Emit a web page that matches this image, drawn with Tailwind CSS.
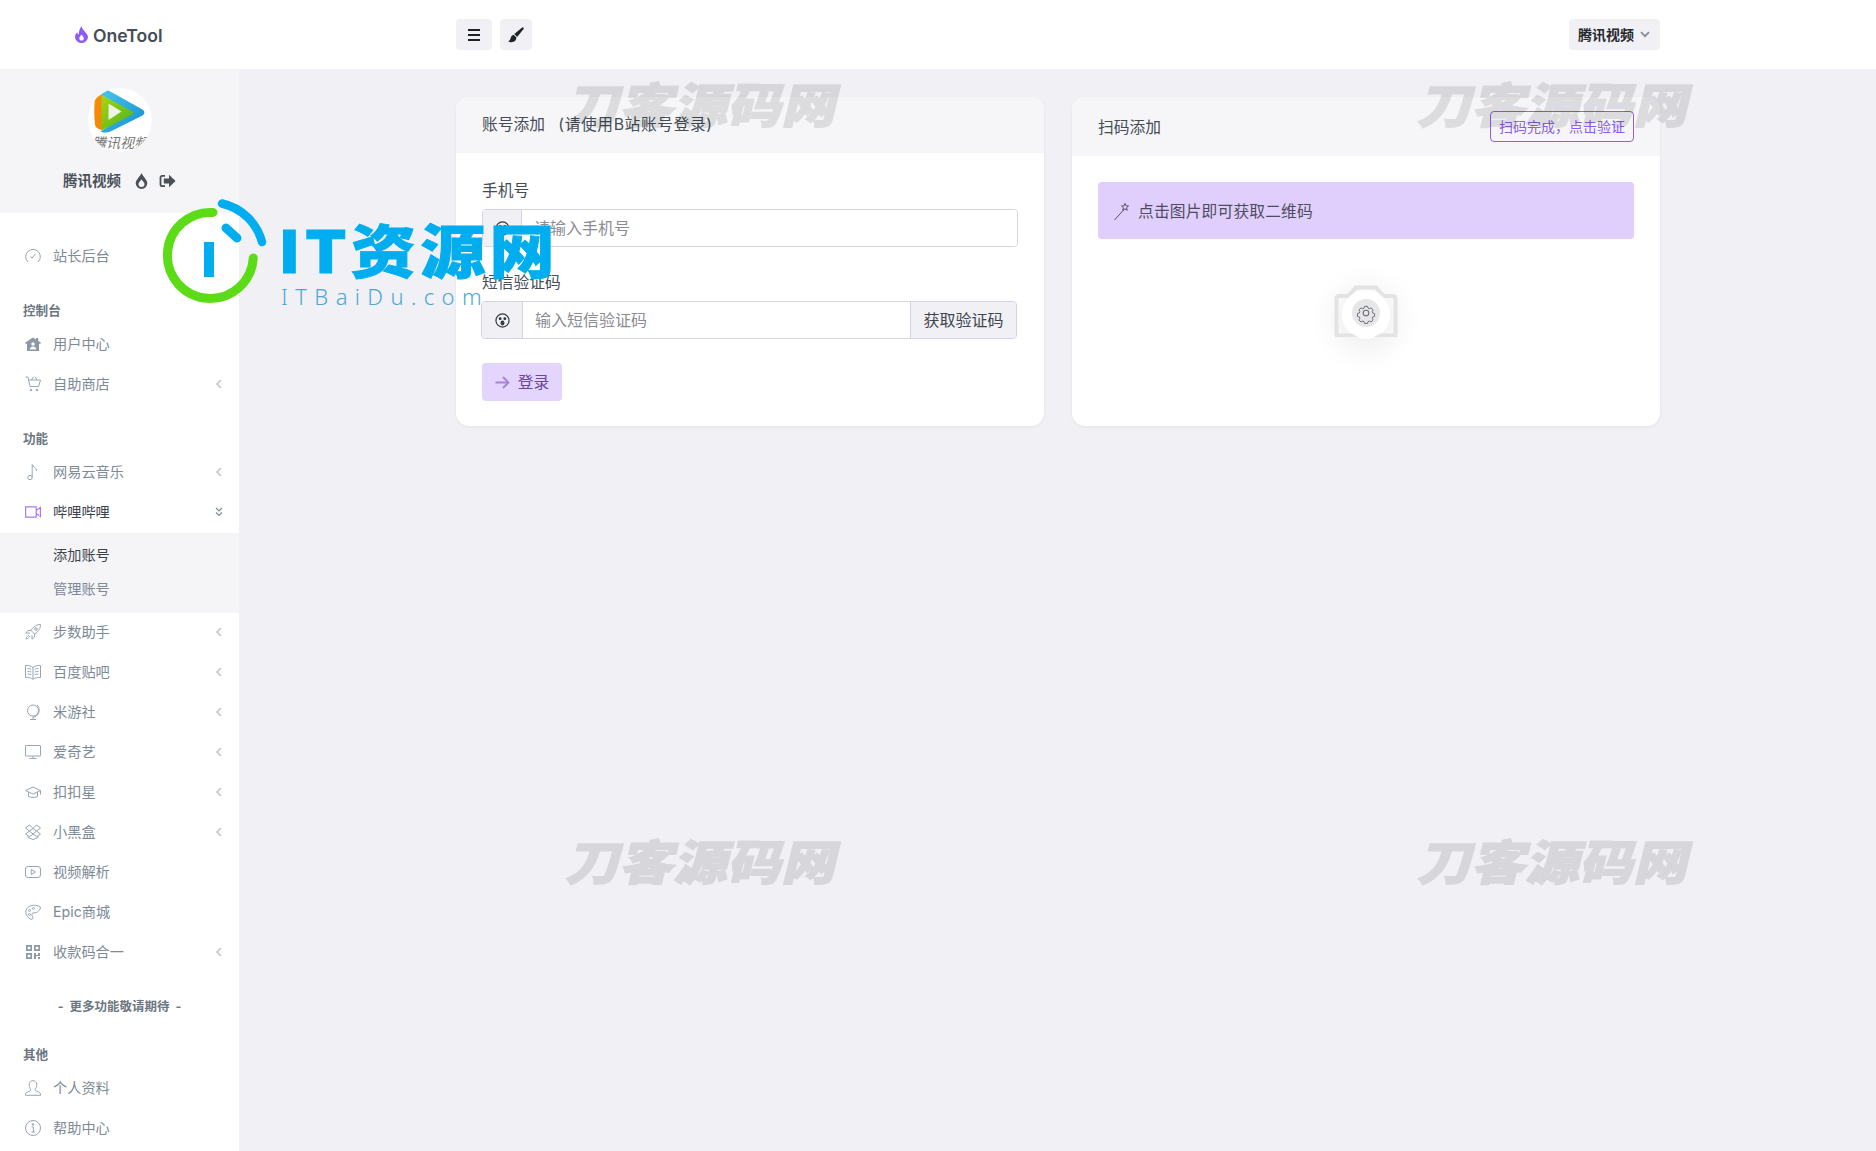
<!DOCTYPE html>
<html lang="zh">
<head>
<meta charset="utf-8">
<title>OneTool</title>
<script src="https://cdn.jsdelivr.net/npm/@tailwindcss/browser@4"></script>
</head>
<body class="m-0">
<div class="relative w-[1876px] h-[1151px] overflow-hidden bg-[#f0f0f5] font-['Inter','Noto_Sans_CJK_SC',sans-serif] text-[#3f4650]">

  <header class="flex h-[69px] bg-white">
    <div class="flex w-[456px] items-center pl-[75px]">
      <svg class="w-[13px] h-[17px]" viewBox="0 0 13 17"><path fill="#8b5cf6" fill-rule="evenodd" d="M6.500 0c.6 2.600 1.500 3.400 3.200 5.400C11.600 7.600 13 9 13 11a6.200 6.200 0 0 1-6.500 6A6.200 6.200 0 0 1 0 11c0-2 1-3.600 2.300-4.800.1 1.300.6 2 1.400 2.400C3.700 5.400 4.800 2.400 6.500 0zM6.600 8.500C5.500 10 4.300 10.800 4.300 12.300c0 1.400 1 2.300 2.200 2.300s2.300-.9 2.300-2.300c0-1.500-1.300-2.300-2.200-3.800z"/></svg>
      <span class="ml-[5px] pt-[2px] text-[17.600px] font-semibold leading-none text-[#454c57]">OneTool</span>
    </div>
    <div class="flex items-center gap-2">
      <button class="flex h-[31px] w-9 items-center justify-center rounded bg-[#f0f0f5]">
        <svg class="w-[14px] h-[12px]" viewBox="0 0 14 12"><path stroke="#1f2328" stroke-width="1.800" d="M1 1h12M1 6h12M1 11h12"/></svg>
      </button>
      <button class="flex h-[31px] w-8 items-center justify-center rounded bg-[#f0f0f5]">
        <svg class="w-4 h-4" viewBox="0 0 15 15"><path fill="#1f2328" d="M14.500.6c.5.5.2 1.200-.3 1.800L8.600 9.300 5.900 6.600 12.700.9c.7-.6 1.300-.8 1.800-.3zM5.300 7.300l2.600 2.600c-.1 2.600-1.900 4.400-4.700 4.400-1 0-2.300-.4-3-1 .9-.2 1.600-.7 1.900-1.700.4-1.700 1-3.900 3.200-4.300z"/></svg>
      </button>
    </div>
    <div class="ml-auto mr-[216px] flex items-center">
      <button class="flex h-[31px] w-[91px] items-center rounded bg-[#f0f0f5] pl-[9px] text-[14px] font-semibold text-[#24282d]">
        腾讯视频
        <svg class="ml-[6px] w-[10px] h-[7px]" viewBox="0 0 10 7"><path fill="none" stroke="#868e96" stroke-width="1.800" d="M1 1.200l4 4 4-4"/></svg>
      </button>
    </div>
  </header>

  <div class="flex h-[1082px]">
    <aside class="w-[239px] shrink-0 bg-white text-[14.200px] text-[#7d8a98]">
      <div class="flex h-[144px] flex-col items-center bg-[#f5f5f8] pt-[19px]">
        <svg class="w-16 h-16" viewBox="0 0 64 64">
          <defs>
            <clipPath id="av"><circle cx="32" cy="32" r="32"/></clipPath>
            <linearGradient id="bl" x1="0" y1="0" x2="1" y2="1"><stop offset="0" stop-color="#4cc4ea"/><stop offset="1" stop-color="#0f8fd0"/></linearGradient>
            <linearGradient id="gr" x1="0" y1="0" x2="1" y2="1"><stop offset="0" stop-color="#a5d80f"/><stop offset="1" stop-color="#4bae1f"/></linearGradient>
          </defs>
          <g clip-path="url(#av)">
            <circle cx="32" cy="32" r="32" fill="#fff"/>
            <g transform="translate(-1.500 0)">
              <path fill="#f58a07" d="M16 6c-4 .5-7 1.500-7.500 4.500-1 8-1 16 0 26 .4 3 3.500 5 7.500 5.500z"/>
              <path fill="url(#bl)" d="M17 2c2-.6 4 0 5.500.8l33 18.500c3.200 1.800 3.200 4.700 0 6.500L24 43.500c-3 1.500-6.500 1.300-9 .5-.8-.3-.5-1 .5-1.500l29-18L15 7c0-2.500 0-4.500 2-5z"/>
              <path fill="url(#gr)" d="M15 7 46 23.500c1.500.8 1.500 2 0 3L15 42.500z"/>
              <path fill="#eef3e6" d="M22 15.500 35 23.500 22 32z"/>
            </g>
            <text x="32" y="60" text-anchor="middle" font-size="14" font-style="italic" fill="#777" font-family="'Noto Sans CJK SC',sans-serif">腾讯视频</text>
          </g>
        </svg>
        <div class="mt-[19px] flex h-[20px] items-center text-[14.500px] font-bold text-[#4a515b]">
          <span class="w-[72px]">腾讯视频</span>
          <svg class="w-[13px] h-[16px]" viewBox="0 0 13 16"><path fill="#495057" fill-rule="evenodd" d="M6.500 0c.8 2.800 5.800 6.800 5.800 10.200a5.800 5.800 0 0 1-11.600 0C.7 6.800 5.700 2.800 6.500 0zM6.500 6.500C5.500 8 3.500 9.300 3.500 11a3 3 0 0 0 6 0c0-1.700-2-3-3-4.500z"/></svg>
          <svg class="ml-[11px] w-[17px] h-[14px]" viewBox="0 0 17 14"><path fill="#495057" d="M6 1H3.200C1.600 1 .6 2 .6 3.600v6.800C.6 12 1.600 13 3.200 13H6v-1.800H3.200c-.5 0-.8-.3-.8-.8V3.600c0-.5.3-.8.8-.8H6zM10 .8 16.600 7 10 13.200V9.500H4.800v-5H10z"/></svg>
        </div>
      </div>

      <nav class="pt-6">
        <a class="flex h-10 items-center pb-[2px] pl-[25px] pr-4">
          <svg class="mr-3 w-4 h-4" viewBox="0 0 16 16" fill="none" stroke="#9aa5b1"><path d="M3 14A7.300 7.300 0 1 1 13 14"/><path d="M5.500 8.500l1.500 1.700 3.500-4.500"/></svg>站长后台
        </a>

        <div class="flex h-12 items-end pb-[5px] pl-[23px] text-[12.600px] leading-[18px] font-bold text-[#6c7682]">控制台</div>
        <a class="flex h-10 items-center pb-[2px] pl-[25px] pr-4">
          <svg class="mr-3 w-4 h-4" viewBox="0 0 16 16"><path fill="#8d98a5" fill-rule="evenodd" d="M8 1.500 11 3.400V2h2.200v2.800L16 6.800l-.7 1H14V15H2V7.800H.7L0 6.800zM8 6.200a1.800 1.800 0 1 0 0 3.600 1.800 1.800 0 0 0 0-3.600zM4.800 13.500h6.400c0-1.800-1.400-3-3.200-3s-3.200 1.200-3.200 3z"/></svg>用户中心
        </a>
        <a class="flex h-10 items-center pb-[2px] pl-[25px] pr-4">
          <svg class="mr-3 w-4 h-4" viewBox="0 0 16 16" fill="none" stroke="#9aa5b1"><path d="M.5 1h2.500l2 9.500h8.500L15.500 4H3.800"/><path d="M6.500 4 8.500 .8M12 4 10 .8"/><circle cx="6" cy="14" r=".8" fill="#9aa5b1"/><circle cx="12" cy="14" r=".8" fill="#9aa5b1"/></svg>自助商店
          <svg class="ml-auto w-2 h-[10px]" viewBox="0 0 8 10"><path fill="none" stroke="#c3c9d0" stroke-width="1.700" d="M6 1 2 5l4 4"/></svg>
        </a>

        <div class="flex h-12 items-end pb-[5px] pl-[23px] text-[12.600px] leading-[18px] font-bold text-[#6c7682]">功能</div>
        <a class="flex h-10 items-center pb-[2px] pl-[25px] pr-4">
          <svg class="mr-3 w-4 h-4" viewBox="0 0 16 16" fill="none" stroke="#9aa5b1"><circle cx="5" cy="13.500" r="2.200"/><path d="M7.200 13.500V.5c.5 2.500 4.500 3 4.500 6.500"/></svg>网易云音乐
          <svg class="ml-auto w-2 h-[10px]" viewBox="0 0 8 10"><path fill="none" stroke="#c3c9d0" stroke-width="1.700" d="M6 1 2 5l4 4"/></svg>
        </a>
        <a class="flex h-10 items-center pb-[2px] pl-[25px] pr-4 text-[#3c434c]">
          <svg class="mr-3 w-4 h-4" viewBox="0 0 16 16" fill="none" stroke="#a67bf5" stroke-width="1.200"><path d="M.6 2.800h10.600v10.400H.6zM11.200 6.500l4.200-3v9l-4.200-3"/></svg>哔哩哔哩
          <svg class="ml-auto w-2 h-[10px]" viewBox="0 0 8 10"><path fill="none" stroke="#7d8a98" stroke-width="1.200" d="M1 1l3 3 3-3M1 5.500l3 3 3-3"/></svg>
        </a>
        <div class="bg-[#f5f5f8] py-[6px] pl-[53px]">
          <a class="flex h-[34px] items-center pb-[2px] text-[#3c434c]">添加账号</a>
          <a class="flex h-[34px] items-center pb-[2px]">管理账号</a>
        </div>
        <a class="flex h-10 items-center pb-[2px] pl-[25px] pr-4">
          <svg class="mr-3 w-4 h-4" viewBox="0 0 16 16" fill="none" stroke="#9aa5b1"><path d="M15.500.5c-3.500 0-7 1.500-9.500 6l3.500 3.500c4.500-2.500 6-6 6-9.500z"/><circle cx="11" cy="5" r="1.300"/><path d="M6 6.500H3L.8 9H4.800M9.500 10v3L7 15.200V11.200M4 11c-1.500.6-2.500 2-3 4 2-.5 3.400-1.500 4-3"/></svg>步数助手
          <svg class="ml-auto w-2 h-[10px]" viewBox="0 0 8 10"><path fill="none" stroke="#c3c9d0" stroke-width="1.700" d="M6 1 2 5l4 4"/></svg>
        </a>
        <a class="flex h-10 items-center pb-[2px] pl-[25px] pr-4">
          <svg class="mr-3 w-4 h-4" viewBox="0 0 16 16" fill="none" stroke="#9aa5b1"><path d="M8 3.500C6 1.800 3 1.300.5 1.500v12c2.500-.2 5.500.2 7.500 1.800 2-1.600 5-2 7.500-1.800v-12C13 1.300 10 1.800 8 3.500zM8 3.500v11.500M2.500 4.500c1.300 0 2.500.2 3.700.7M2.500 7.300c1.300 0 2.500.2 3.700.7M2.500 10c1.300 0 2.500.2 3.700.7M13.500 4.500c-1.300 0-2.500.2-3.700.7M13.500 7.300c-1.300 0-2.500.2-3.700.7M13.500 10c-1.300 0-2.500.2-3.700.7"/></svg>百度贴吧
          <svg class="ml-auto w-2 h-[10px]" viewBox="0 0 8 10"><path fill="none" stroke="#c3c9d0" stroke-width="1.700" d="M6 1 2 5l4 4"/></svg>
        </a>
        <a class="flex h-10 items-center pb-[2px] pl-[25px] pr-4">
          <svg class="mr-3 w-4 h-4" viewBox="0 0 16 16" fill="none" stroke="#9aa5b1"><circle cx="8" cy="6.500" r="5.500"/><path d="M12 .8a7.500 7.500 0 0 1-1 11.500c-1.200.8-2.500 1-3.500 1M8 13.500v2M5 15.500h6"/></svg>米游社
          <svg class="ml-auto w-2 h-[10px]" viewBox="0 0 8 10"><path fill="none" stroke="#c3c9d0" stroke-width="1.700" d="M6 1 2 5l4 4"/></svg>
        </a>
        <a class="flex h-10 items-center pb-[2px] pl-[25px] pr-4">
          <svg class="mr-3 w-4 h-4" viewBox="0 0 16 16" fill="none" stroke="#9aa5b1"><rect x=".5" y="1.500" width="15" height="10.500" rx=".5"/><path d="M8 12v2.500M4.500 14.500h7"/></svg>爱奇艺
          <svg class="ml-auto w-2 h-[10px]" viewBox="0 0 8 10"><path fill="none" stroke="#c3c9d0" stroke-width="1.700" d="M6 1 2 5l4 4"/></svg>
        </a>
        <a class="flex h-10 items-center pb-[2px] pl-[25px] pr-4">
          <svg class="mr-3 w-4 h-4" viewBox="0 0 16 16" fill="none" stroke="#9aa5b1"><path d="M.5 6.500 8 3l7.500 3.500L8 10z"/><path d="M3.500 8v4.500c1.500 1.200 7.500 1.200 9 0V8M15.500 6.500v4"/></svg>扣扣星
          <svg class="ml-auto w-2 h-[10px]" viewBox="0 0 8 10"><path fill="none" stroke="#c3c9d0" stroke-width="1.700" d="M6 1 2 5l4 4"/></svg>
        </a>
        <a class="flex h-10 items-center pb-[2px] pl-[25px] pr-4">
          <svg class="mr-3 w-4 h-4" viewBox="0 0 16 16" fill="none" stroke="#9aa5b1"><path d="M4.500 1 .5 4 4.500 7 8 4.500 4.500 1zM11.500 1l4 3-4 3L8 4.500zM4.500 7 .5 10l4 2.500L8 10zM11.500 7l4 3-4 2.500L8 10zM3 12v1.500L8 15.500l5-2V12"/></svg>小黑盒
          <svg class="ml-auto w-2 h-[10px]" viewBox="0 0 8 10"><path fill="none" stroke="#c3c9d0" stroke-width="1.700" d="M6 1 2 5l4 4"/></svg>
        </a>
        <a class="flex h-10 items-center pb-[2px] pl-[25px] pr-4">
          <svg class="mr-3 w-4 h-4" viewBox="0 0 16 16" fill="none" stroke="#9aa5b1"><rect x=".5" y="2.500" width="15" height="11" rx="2.500"/><path d="M6.300 5.500 10.500 8l-4.200 2.500z"/></svg>视频解析
        </a>
        <a class="flex h-10 items-center pb-[2px] pl-[25px] pr-4">
          <svg class="mr-3 w-4 h-4" viewBox="0 0 16 16" fill="none" stroke="#9aa5b1"><path d="M7 15.300C4.500 15.500 2.800 13 1.500 11 .3 8.500.5 5.500 3 3.300 6 .8 11 .5 15.500 3c-.2 3.500-3.500 6.300-6.500 5.800-1.500 0-2.500 1-2 2.500.4 1.200 1.300 2.300.8 3.300-.1.400-.4.700-.8.700z"/><circle cx="4.500" cy="6.500" r="1"/><circle cx="4.500" cy="10.500" r="1"/><circle cx="8.500" cy="4.500" r="1"/></svg>Epic商城
        </a>
        <a class="flex h-10 items-center pb-[2px] pl-[25px] pr-4">
          <svg class="mr-3 w-4 h-4" viewBox="0 0 16 16"><path fill="#8d98a5" fill-rule="evenodd" d="M1 1h6v6H1zM2.700 2.700v2.600h2.600V2.700zM9 1h6v6H9zM10.700 2.700v2.600h2.600V2.700zM1 9h6v6H1zM2.700 10.700v2.600h2.600v-2.600zM9 9h2v2h2V9h2v3h-4v3H9zM13 13h2v2h-2z"/></svg>收款码合一
          <svg class="ml-auto w-2 h-[10px]" viewBox="0 0 8 10"><path fill="none" stroke="#c3c9d0" stroke-width="1.700" d="M6 1 2 5l4 4"/></svg>
        </a>

        <div class="flex h-12 items-end justify-center pb-[5px] text-[12.500px] leading-[18px] font-bold whitespace-pre text-[#6c7682]">-  更多功能敬请期待  -</div>
        <div class="flex h-12 items-end pb-[5px] pl-[23px] text-[12.600px] leading-[18px] font-bold text-[#6c7682]">其他</div>
        <a class="flex h-10 items-center pb-[2px] pl-[25px] pr-4">
          <svg class="mr-3 w-4 h-4" viewBox="0 0 16 16" fill="none" stroke="#9aa5b1"><path d="M.5 15.300v-1.500c0-1.500 4-2.300 5-3.300.5-.6.200-1.300-.3-2-.8-1.200-1.200-3-1-4.500C4.500 2 6 .7 8 .7s3.500 1.300 3.800 3.300c.2 1.500-.2 3.300-1 4.500-.5.700-.8 1.400-.3 2 1 1 5 1.800 5 3.300v1.500z"/></svg>个人资料
        </a>
        <a class="flex h-10 items-center pb-[2px] pl-[25px] pr-4">
          <svg class="mr-3 w-4 h-4" viewBox="0 0 16 16" fill="none" stroke="#9aa5b1"><circle cx="8" cy="8" r="7.500"/><path d="M6.500 7h1.800v5M6.500 12h3.500"/><circle cx="8" cy="4.500" r=".8" fill="#9aa5b1"/></svg>帮助中心
        </a>
      </nav>
    </aside>

    <main class="flex flex-1 items-start gap-7 pl-[217px] pt-7">
      <section class="h-[329px] w-[588px] overflow-hidden rounded-[13px] bg-white shadow-[0_1px_3px_rgba(60,60,90,0.08)]">
        <div class="flex h-[56px] items-center bg-[#f6f6f9] pl-[26px] text-[15.750px] whitespace-pre text-[#454c55]">账号添加   <span class="tracking-[0.6px]">(请使用B站账号登录)</span></div>
        <div class="px-[26px] pt-[26px] text-[15.750px]">
          <label class="block leading-[24px] text-[#454c55]">手机号</label>
          <div class="mt-[6px] flex h-[38px] w-[536px] overflow-hidden rounded-[4px] border border-[#d5d3e4]">
            <span class="flex w-[39px] shrink-0 items-center justify-center border-r border-[#d5d3e4] bg-[#f0f0f5]">
              <svg class="w-[15px] h-[15px]" viewBox="0 0 16 16" fill="none" stroke="#343a40" stroke-width="1.300"><circle cx="8" cy="8" r="7"/><path d="M3.500 9h9"/><circle cx="5.500" cy="5.800" r=".9" fill="#343a40"/><circle cx="10.500" cy="5.800" r=".9" fill="#343a40"/></svg>
            </span>
            <input class="min-w-0 flex-1 bg-white pl-[12px] text-[16px] outline-none placeholder:text-[#8b8c95]" placeholder="请输入手机号">
          </div>
          <label class="mt-[24px] block leading-[24px] text-[#454c55]">短信验证码</label>
          <div class="-ml-px mt-[6px] flex h-[38px] w-[536px] overflow-hidden rounded-[4px] border border-[#d5d3e4]">
            <span class="flex w-[41px] shrink-0 items-center justify-center border-r border-[#d5d3e4] bg-[#f0f0f5]">
              <svg class="w-[15px] h-[15px]" viewBox="0 0 16 16" fill="none" stroke="#343a40" stroke-width="1.300"><circle cx="8" cy="8" r="7"/><circle cx="5.500" cy="6" r=".9" fill="#343a40"/><circle cx="10.500" cy="6" r=".9" fill="#343a40"/><ellipse cx="8" cy="10.700" rx="1.500" ry="2" fill="#343a40"/></svg>
            </span>
            <input class="min-w-0 flex-1 bg-white pl-[12px] text-[16px] outline-none placeholder:text-[#8b8c95]" placeholder="输入短信验证码">
            <button class="w-[106px] shrink-0 border-l border-[#d5d3e4] bg-[#f0f0f5] text-[16px] text-[#3f4650]">获取验证码</button>
          </div>
          <button class="mt-[24px] flex h-[38px] w-[80px] items-center justify-center rounded-[4px] bg-[#e3d5fb] pt-[2px] text-[#69459e]">
            <svg class="mr-[8px] w-[15px] h-[13px] -mt-[2px]" viewBox="0 0 15 13" fill="none" stroke="#a585d6" stroke-width="1.900"><path d="M.5 6.500h13M8 1l5.500 5.500L8 12"/></svg>登录
          </button>
        </div>
      </section>

      <section class="h-[329px] w-[588px] overflow-hidden rounded-[13px] bg-white shadow-[0_1px_3px_rgba(60,60,90,0.08)]">
        <div class="flex h-[59px] items-center justify-between bg-[#f6f6f9] px-[26px] text-[15.750px] text-[#454c55]">
          <span class="pt-[2px]">扫码添加</span>
          <button class="mt-[-1px] flex h-[31px] w-[144px] items-center justify-center rounded-[4px] border border-[#8f5fe8] text-[14px] text-[#8b5cf6]">扫码完成，点击验证</button>
        </div>
        <div class="px-[26px] pt-[26px]">
          <div class="flex h-[57px] items-center rounded-[4px] bg-[#e0cffc] pl-4 text-[15.750px] text-[#4f4b5e]">
            <svg class="mr-2 w-4 h-5" viewBox="0 0 16 20" fill="none" stroke="#55525f"><path d="M.5 19 10 8.500M11 2.500l1 2.300 2.500.2-1.900 1.700.6 2.500L11 7.900l-2.200 1.300.6-2.500L7.500 5l2.500-.2z"/></svg>
            <span class="pt-[2px] tracking-[0.15px]">点击图片即可获取二维码</span>
          </div>
          <div class="mt-[46px] flex justify-center">
            <div class="relative h-[52px] w-[64px]">
              <div class="absolute left-[8px] top-[6px] h-[48px] w-[48px] rounded-full bg-white shadow-[0_4px_30px_8px_rgba(0,0,0,0.07)]"></div>
              <svg class="absolute inset-0 h-[52px] w-[64px]" viewBox="0 0 64 52" fill="none">
                <path stroke="#e3e3e5" stroke-width="4" d="M2.500 50V14c0-2 1-3 3-3h9L22 2.500h20l7.500 8.500h9c2 0 3 1 3 3v36"/>
                <path stroke="#e3e3e5" stroke-width="3.500" d="M1 50.200h62"/>
                <ellipse cx="32" cy="29" rx="24" ry="24" fill="#fff"/>
                <ellipse cx="32" cy="28" rx="14" ry="14" fill="#e7e7e9"/>
                <g stroke="#6b6f76" stroke-width="1.100">
                  <circle cx="32" cy="28" r="2.800"/>
                  <path d="M30.300 20.500h3.400l.5 2 1.500.7 1.900-1 2.300 2.400-1 1.800.6 1.500 2 .6v3.300l-2 .5-.6 1.500 1 1.900-2.300 2.300-1.900-1-1.500.6-.5 2h-3.400l-.5-2-1.500-.6-1.900 1-2.300-2.300 1-1.900-.6-1.500-2-.5v-3.300l2-.6.6-1.500-1-1.800 2.300-2.400 1.900 1 1.500-.7z" transform="translate(3.400 3) scale(.895)"/>
                </g>
              </svg>
            </div>
          </div>
        </div>
      </section>
    </main>
  </div>

  <!-- overlaid watermarks -->
  <div class="pointer-events-none absolute left-[570px] top-[73px] origin-center -skew-x-12 scale-y-[0.88] text-[54px] leading-[60px] font-black whitespace-nowrap text-black opacity-10 [-webkit-text-stroke:1.500px_black] font-['Noto_Sans_CJK_SC',sans-serif]">刀客源码网</div>
  <div class="pointer-events-none absolute left-[1422px] top-[73px] origin-center -skew-x-12 scale-y-[0.88] text-[54px] leading-[60px] font-black whitespace-nowrap text-black opacity-10 [-webkit-text-stroke:1.500px_black] font-['Noto_Sans_CJK_SC',sans-serif]">刀客源码网</div>
  <div class="pointer-events-none absolute left-[570px] top-[830px] origin-center -skew-x-12 scale-y-[0.88] text-[54px] leading-[60px] font-black whitespace-nowrap text-black opacity-10 [-webkit-text-stroke:1.500px_black] font-['Noto_Sans_CJK_SC',sans-serif]">刀客源码网</div>
  <div class="pointer-events-none absolute left-[1422px] top-[830px] origin-center -skew-x-12 scale-y-[0.88] text-[54px] leading-[60px] font-black whitespace-nowrap text-black opacity-10 [-webkit-text-stroke:1.500px_black] font-['Noto_Sans_CJK_SC',sans-serif]">刀客源码网</div>

  <svg class="pointer-events-none absolute left-[160px] top-[196px] h-[112px] w-[112px]" viewBox="0 0 112 112" fill="none" stroke-linecap="round">
    <path stroke="#5bdc17" stroke-width="9" d="M53 16.500A43 43 0 1 0 93.300 62"/>
    <path stroke="#00aeef" stroke-width="8.500" d="M62 7.500A53.500 53.500 0 0 1 102 46"/>
    <path stroke="#00aeef" stroke-width="9" d="M66 32 77 42"/>
    <path stroke="#00aeef" stroke-width="10" stroke-linecap="butt" d="M49 46V81"/>
  </svg>
  <div class="pointer-events-none absolute left-[278px] top-[206px] origin-left scale-x-[1.05] scale-y-[0.94] text-[62px] leading-[84px] font-black tracking-[4px] whitespace-nowrap text-[#00aeef] [-webkit-text-stroke:1px_#00aeef] font-['Noto_Sans_CJK_SC',sans-serif]">IT资源网</div>
  <div class="pointer-events-none absolute left-[281px] top-[282px] text-[22px] leading-[28px] font-light tracking-[7.400px] whitespace-nowrap text-[#4aa8d4] font-['Noto_Sans',sans-serif]">ITBaiDu.com</div>
</div>
</body>
</html>
